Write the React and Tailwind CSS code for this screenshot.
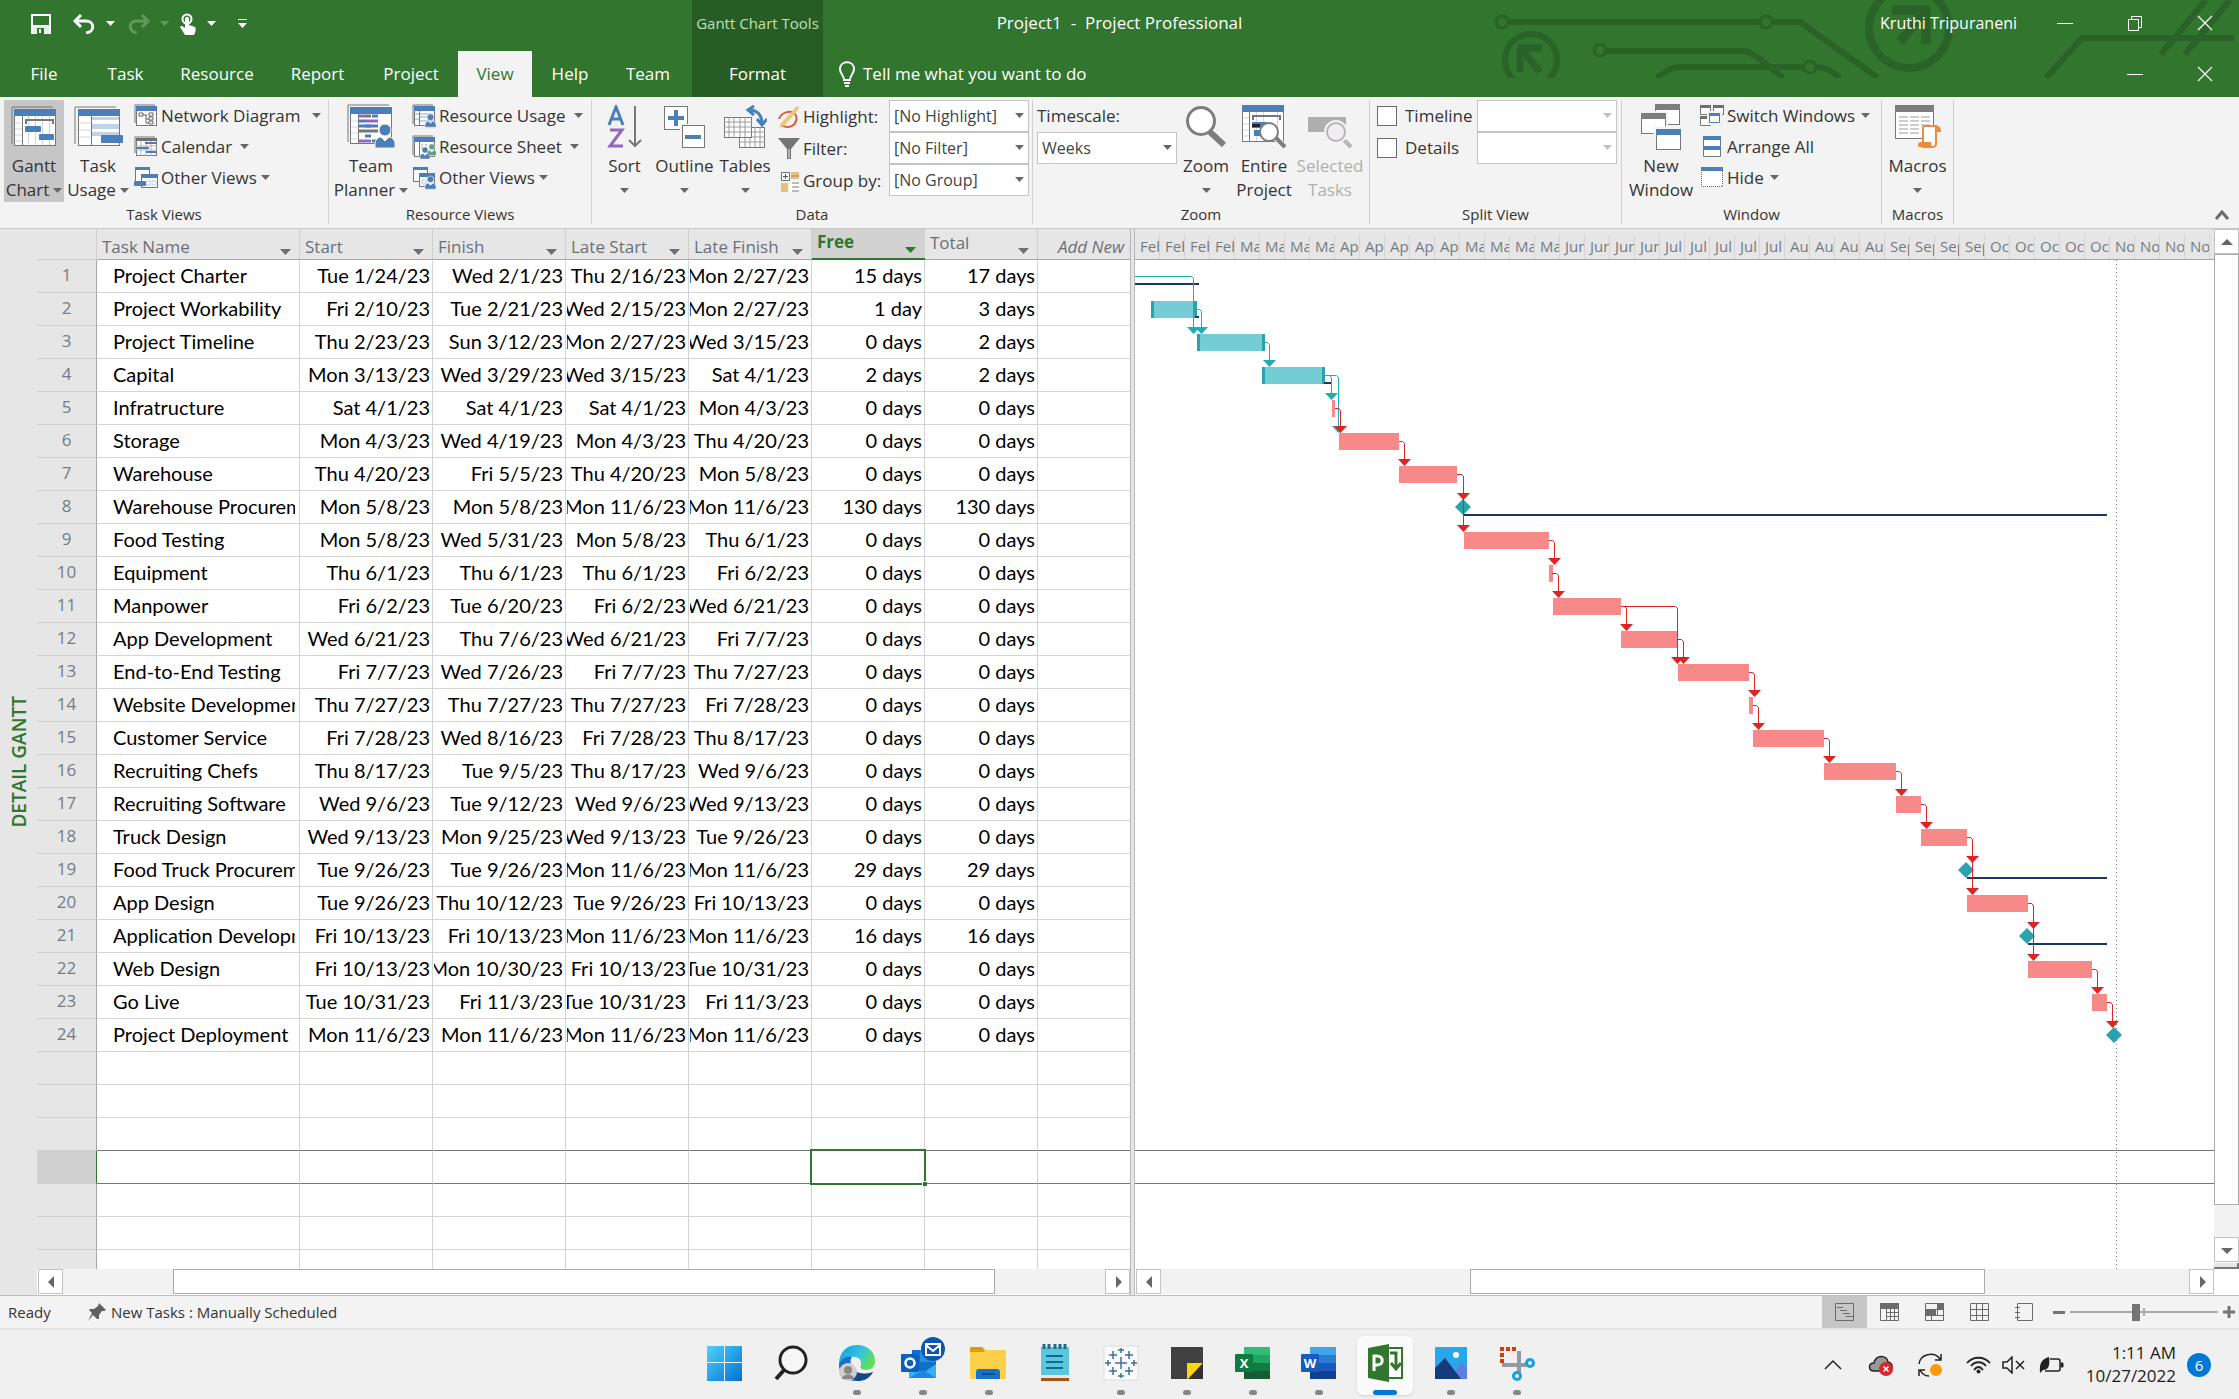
import React from "react";

const BLUE = "#4a7fb8";
const GREY = "#777777";

/* ---------- data ---------- */

const TASKS = [
  ["Project Charter", "Tue 1/24/23", "Wed 2/1/23", "Thu 2/16/23", "Mon 2/27/23", "15 days", "17 days"],
  ["Project Workability", "Fri 2/10/23", "Tue 2/21/23", "Wed 2/15/23", "Mon 2/27/23", "1 day", "3 days"],
  ["Project Timeline", "Thu 2/23/23", "Sun 3/12/23", "Mon 2/27/23", "Wed 3/15/23", "0 days", "2 days"],
  ["Capital", "Mon 3/13/23", "Wed 3/29/23", "Wed 3/15/23", "Sat 4/1/23", "2 days", "2 days"],
  ["Infratructure", "Sat 4/1/23", "Sat 4/1/23", "Sat 4/1/23", "Mon 4/3/23", "0 days", "0 days"],
  ["Storage", "Mon 4/3/23", "Wed 4/19/23", "Mon 4/3/23", "Thu 4/20/23", "0 days", "0 days"],
  ["Warehouse", "Thu 4/20/23", "Fri 5/5/23", "Thu 4/20/23", "Mon 5/8/23", "0 days", "0 days"],
  ["Warehouse Procurement", "Mon 5/8/23", "Mon 5/8/23", "Mon 11/6/23", "Mon 11/6/23", "130 days", "130 days"],
  ["Food Testing", "Mon 5/8/23", "Wed 5/31/23", "Mon 5/8/23", "Thu 6/1/23", "0 days", "0 days"],
  ["Equipment", "Thu 6/1/23", "Thu 6/1/23", "Thu 6/1/23", "Fri 6/2/23", "0 days", "0 days"],
  ["Manpower", "Fri 6/2/23", "Tue 6/20/23", "Fri 6/2/23", "Wed 6/21/23", "0 days", "0 days"],
  ["App Development", "Wed 6/21/23", "Thu 7/6/23", "Wed 6/21/23", "Fri 7/7/23", "0 days", "0 days"],
  ["End-to-End Testing", "Fri 7/7/23", "Wed 7/26/23", "Fri 7/7/23", "Thu 7/27/23", "0 days", "0 days"],
  ["Website Development", "Thu 7/27/23", "Thu 7/27/23", "Thu 7/27/23", "Fri 7/28/23", "0 days", "0 days"],
  ["Customer Service", "Fri 7/28/23", "Wed 8/16/23", "Fri 7/28/23", "Thu 8/17/23", "0 days", "0 days"],
  ["Recruiting Chefs", "Thu 8/17/23", "Tue 9/5/23", "Thu 8/17/23", "Wed 9/6/23", "0 days", "0 days"],
  ["Recruiting Software", "Wed 9/6/23", "Tue 9/12/23", "Wed 9/6/23", "Wed 9/13/23", "0 days", "0 days"],
  ["Truck Design", "Wed 9/13/23", "Mon 9/25/23", "Wed 9/13/23", "Tue 9/26/23", "0 days", "0 days"],
  ["Food Truck Procurement", "Tue 9/26/23", "Tue 9/26/23", "Mon 11/6/23", "Mon 11/6/23", "29 days", "29 days"],
  ["App Design", "Tue 9/26/23", "Thu 10/12/23", "Tue 9/26/23", "Fri 10/13/23", "0 days", "0 days"],
  ["Application Development", "Fri 10/13/23", "Fri 10/13/23", "Mon 11/6/23", "Mon 11/6/23", "16 days", "16 days"],
  ["Web Design", "Fri 10/13/23", "Mon 10/30/23", "Fri 10/13/23", "Tue 10/31/23", "0 days", "0 days"],
  ["Go Live", "Tue 10/31/23", "Fri 11/3/23", "Tue 10/31/23", "Fri 11/3/23", "0 days", "0 days"],
  ["Project Deployment", "Mon 11/6/23", "Mon 11/6/23", "Mon 11/6/23", "Mon 11/6/23", "0 days", "0 days"],
];

const MONTHS = [["Feb", 4], ["Mar", 4], ["Apr", 5], ["May", 4], ["Jun", 4], ["Jul", 5], ["Aug", 4], ["Sep", 4], ["Oct", 5], ["Nov", 4]];
const WEEKS = MONTHS.flatMap(([m, n]) => Array.from({ length: n }, () => m));

/* row number, left, right */
const TEAL_BARS = [[2, 16, 62], [3, 62, 130], [4, 127, 190]];
const RED_BARS = [
  [5, 197, 200], [6, 204, 264], [7, 264, 322], [9, 329, 414], [10, 414, 418], [11, 418, 486],
  [12, 486, 543], [13, 543, 614], [14, 614, 618], [15, 618, 689], [16, 689, 761], [17, 761, 786],
  [18, 786, 832], [20, 832, 893], [22, 893, 957], [23, 957, 972],
];
const SLACK = [[1, 0, 64], [2, 60, 64], [4, 189, 196], [8, 329, 972], [19, 832, 972], [21, 893, 972]];
/* from row, bar end, arrow x, to row, target is a milestone */
const TEAL_LINKS = [[1, 0, 58, 3], [2, 62, 66, 3], [3, 130, 134, 4], [4, 190, 196, 5], [4, 190, 203, 6]];
const RED_LINKS = [
  [5, 200, 205, 6], [6, 264, 269, 7], [7, 322, 328, 8, true], [7, 322, 328, 9], [9, 414, 419, 10], [10, 417, 423, 11],
  [11, 486, 491, 12], [11, 486, 542, 13], [12, 543, 548, 13], [13, 614, 619, 14], [14, 618, 623, 15], [15, 689, 694, 16],
  [16, 761, 766, 17], [17, 786, 791, 18], [18, 832, 837, 19, true], [18, 832, 837, 20], [20, 893, 898, 21, true],
  [20, 893, 898, 22], [22, 957, 962, 23], [23, 972, 977, 24, true],
];
const MILESTONES = [[8, 328], [19, 831], [21, 892], [24, 979]];
const barTop = (row) => 8 + 33 * (row - 1);

/* ---------- small pieces ---------- */

function Caret({ className = "text-[#666]" }) {
  return (
    <svg width="9" height="5" viewBox="0 0 9 5" className={"shrink-0 " + className}>
      <path d="M0 0H9L4.500 5Z" fill="currentColor" />
    </svg>
  );
}

function Svg({ w, h, children }) {
  return (
    <svg width={w} height={h} viewBox={`0 0 ${w} ${h}`} fill="none" className="shrink-0">
      {children}
    </svg>
  );
}

function Person({ x, y, s = 1, color = BLUE }) {
  return (
    <g transform={`translate(${x} ${y}) scale(${s})`} fill={color} stroke="#f3f3f3" strokeWidth="1">
      <path d="M0 24v-4c0-4 3-7 6-7l4 4 4-4c3 0 6 3 6 7v4z" />
      <circle cx="10" cy="6" r="6" />
    </g>
  );
}

/* ---------- large ribbon icons ---------- */

const GanttIcon = () => (
  <Svg w={46} h={42}>
    <path d="M1 38V1H42" stroke={GREY} />
    <rect x="3.500" y="3.500" width="41" height="36" fill="#fff" stroke={GREY} />
    <path d="M4 17h7M4 23h7M4 29h7M4 35h7M17.500 10v29M24.500 10v29M31.500 10v29M38.500 10v29" stroke="#c8d8ea" />
    <path d="M11.500 10v29" stroke={GREY} />
    <path d="M3 3h42v7H3z" fill={BLUE} />
    <path d="M15 18v-4h27v4" stroke={GREY} strokeWidth="2" />
    <rect x="14" y="20" width="16" height="6" rx="1" fill={BLUE} />
    <rect x="28" y="28" width="15" height="6" rx="1" fill={BLUE} />
  </Svg>
);

const TaskUsageIcon = () => (
  <Svg w={49} h={42}>
    <path d="M1 38V1H42" stroke={GREY} />
    <rect x="4.500" y="3.500" width="41" height="36" fill="#fff" stroke={GREY} />
    <path d="M5 17h12M5 24h12M5 31h12" stroke="#c8d8ea" />
    <path d="M18 11h27v3H18zM18 18h27v5H18zM18 26h27v4H18z" fill="#c1d3e9" />
    <path d="M17.500 10v29" stroke={GREY} />
    <path d="M4 3h42v7H4z" fill={BLUE} />
    <rect x="27" y="29" width="22" height="8" rx="1" fill={BLUE} />
  </Svg>
);

const TeamPlannerIcon = () => (
  <Svg w={49} h={46}>
    <path d="M1 38V1H42" stroke={GREY} />
    <rect x="3.500" y="3.500" width="41" height="36" fill="#fff" stroke={GREY} />
    <path d="M4 17h7M4 23h7M4 29h7M4 35h7" stroke="#c8d8ea" />
    <path d="M11.500 10v29" stroke={GREY} />
    <path d="M3 3h42v7H3z" fill={BLUE} />
    <path d="M12 12h6M18 22h6M12 37h6" stroke="#9467bd" strokeWidth="3" />
    <path d="M12 17h6M25 12h6M12 22h19M18 32h6M25 37h5" stroke={BLUE} strokeWidth="3" />
    <path d="M18 12h6M12 27h19" stroke={GREY} strokeWidth="3" />
    <path d="M18 17h13M18 37h6" stroke="#9467bd" strokeWidth="3" />
    <Person x={28} y={20} />
  </Svg>
);

const SortIcon = () => (
  <Svg w={36} h={44}>
    <path d="M2 20L9 2L16 20M5 14H14" stroke={BLUE} strokeWidth="3" />
    <path d="M3 25H15L3 41H16" stroke="#9467bd" strokeWidth="3" />
    <path d="M28 1V41M22 35L28 41L34 35" stroke={GREY} strokeWidth="2" />
  </Svg>
);

const OutlineIcon = () => (
  <Svg w={43} h={44}>
    <rect x="1.500" y="1.500" width="23" height="23" fill="#fff" stroke={GREY} />
    <path d="M5 13h16M13 5v16" stroke={BLUE} strokeWidth="4" />
    <rect x="18.500" y="20.500" width="24" height="23" fill="#fff" stroke="#f3f3f3" strokeWidth="3" />
    <rect x="19.500" y="20.500" width="22" height="22" fill="#fff" stroke={GREY} />
    <path d="M22 32h16" stroke={BLUE} strokeWidth="4" />
  </Svg>
);

const TablesIcon = () => (
  <Svg w={44} h={44}>
    <rect x="16.500" y="22.500" width="25" height="20" fill="#fff" stroke={GREY} />
    <path d="M16 27h26M16 32h26M16 37h26M22 22v20M27 22v20M32 22v20M37 22v20" stroke="#9a9a9a" />
    <rect x="1.500" y="12.500" width="27" height="20" fill="#fff" stroke={GREY} />
    <path d="M1 17h28M1 22h28M1 27h28M6 12v20M11 12v20M17 12v20M22 12v20" stroke="#9a9a9a" />
    <path d="M25 5c9-1 14 5 14 14M31 1l-6 4 6 5M34 14l5 6 5-6" stroke={BLUE} strokeWidth="3" />
  </Svg>
);

const ZoomIcon = () => (
  <Svg w={42} h={42}>
    <path d="M25 26L39 39" stroke="#7d7d7d" strokeWidth="6" />
    <circle cx="16" cy="15" r="13.500" fill="#fff" stroke="#7d7d7d" strokeWidth="3" />
  </Svg>
);

const EntireIcon = () => (
  <Svg w={46} h={45}>
    <rect x="1.500" y="1.500" width="41" height="36" fill="#fff" stroke={GREY} />
    <path d="M2 14h6M2 20h6M2 26h6M2 32h6M15.500 8v29M22.500 8v29M36.500 8v29" stroke="#c8d8ea" />
    <path d="M8.500 8v29" stroke={GREY} />
    <path d="M1 1h42v7H1z" fill={BLUE} />
    <path d="M12 16v-4h27v4" stroke={GREY} strokeWidth="2" />
    <path d="M11 18h15v6H11zM13 26h10v6H13z" fill={BLUE} />
    <path d="M11 20h8v3h-8z" fill="#222" />
    <path d="M34 33l10 10" stroke="#f3f3f3" strokeWidth="6" />
    <path d="M34 33l10 10" stroke="#7d7d7d" strokeWidth="4" />
    <circle cx="28" cy="28" r="9" fill="#fff" stroke="#7d7d7d" strokeWidth="2" />
  </Svg>
);

const SelectedIcon = () => (
  <Svg w={46} h={45}>
    <path d="M1 13h38v15H1z" fill="#aeaeae" />
    <path d="M34 33l10 10" stroke="#b5b5b5" strokeWidth="4" />
    <circle cx="29" cy="28" r="10" fill="#f1eef2" stroke="#f3f3f3" strokeWidth="4" />
    <circle cx="29" cy="28" r="9" fill="#f1eef2" stroke="#b5b5b5" strokeWidth="2" />
  </Svg>
);

const NewWindowIcon = () => (
  <Svg w={42} h={46}>
    <rect x="15.500" y="0.500" width="24" height="20" fill="#fff" stroke={GREY} />
    <path d="M15 0h25v6H15z" fill="#7d7d7d" />
    <rect x="0.500" y="8.500" width="26" height="22" fill="#fff" stroke="#f3f3f3" strokeWidth="3" />
    <rect x="1.500" y="9.500" width="24" height="20" fill="#fff" stroke={GREY} />
    <path d="M1 9h25v6H1z" fill="#7d7d7d" />
    <rect x="15" y="24" width="26" height="21" fill="#fff" stroke="#f3f3f3" strokeWidth="3" />
    <rect x="16.500" y="25.500" width="24" height="20" fill="#fff" stroke={GREY} />
    <path d="M16 25h25v6H16z" fill={BLUE} />
  </Svg>
);

const MacrosIcon = () => (
  <Svg w={46} h={44}>
    <rect x="0.500" y="0.500" width="38" height="33" fill="#fff" stroke={GREY} />
    <path d="M0 0h39v7H0z" fill="#7d7d7d" />
    <path d="M4 12h9M15 12h9M26 12h9M4 16h9M15 16h9M26 16h9M4 20h9M15 20h9M26 20h9M4 24h9M15 24h9M4 28h9M15 28h9" stroke="#9b9b9b" />
    <path d="M28 23c0-2 1-2 2-2h12c-2 1-1 4-1 6v12c0 2-2 3-3 3H28z" fill="#fff" stroke="#e88d3f" strokeWidth="2" />
    <path d="M42 21c3 0 4 2 4 6h-4zM23 41c0-4 2-4 4-4h9c0 4 1 5 3 5H26c-2 0-3 0-3-1z" fill="#e88d3f" />
  </Svg>
);

/* ---------- small ribbon icons ---------- */

const NetworkIcon = () => (
  <Svg w={24} h={23}>
    <path d="M1 19V1H21" stroke={GREY} />
    <rect x="2.500" y="2.500" width="20" height="19" fill="#fff" stroke={GREY} />
    <path d="M2 2h21v5H2z" fill={BLUE} />
    <path d="M5 9h4v3H5zM15 9h4v3h-4zM15 13h4v3h-4zM15 17h4v3h-4zM9 11h4M12 11v8h3M12 15h3" stroke="#666" />
  </Svg>
);
const CalendarIcon = () => (
  <Svg w={24} h={21}>
    <path d="M1 17V1H21" stroke={GREY} />
    <rect x="2.500" y="2.500" width="20" height="17" fill="#fff" stroke={GREY} />
    <path d="M2 10h21M2 14h21M7 5v15M12 5v15M17 5v15" stroke="#b5b5b5" />
    <path d="M2 2h21v3H2z" fill="#6f6f6f" />
    <path d="M11 7h11M3 12h12M12 16h10" stroke={BLUE} strokeWidth="2" />
  </Svg>
);
const OtherTaskIcon = () => (
  <Svg w={24} h={23}>
    <rect x="1.500" y="1.500" width="14" height="14" fill="#fff" stroke={GREY} />
    <path d="M1 1h15v3H1z" fill={BLUE} />
    <rect x="7.500" y="8.500" width="16" height="13" fill="#fff" stroke={GREY} />
    <path d="M7 8h17v4H7z" fill={BLUE} />
    <path d="M12 15h4v4h-4zM18 15h4v4h-4z" stroke="#b4cbe6" />
    <rect x="0" y="15" width="12" height="5" rx="1" fill={BLUE} />
  </Svg>
);
const ResourceUsageIcon = () => (
  <Svg w={24} h={24}>
    <path d="M1 20V1H21" stroke={GREY} />
    <rect x="2.500" y="2.500" width="20" height="19" fill="#fff" stroke={GREY} />
    <path d="M8 10h13M8 13h13M8 17h13M3 10h4M3 15h4" stroke="#c1d3e9" strokeWidth="2" />
    <path d="M7.500 6v15" stroke={GREY} />
    <path d="M2 2h21v5H2z" fill={BLUE} />
    <Person x={13} y={10} s={0.55} />
  </Svg>
);
const ResourceSheetIcon = () => (
  <Svg w={24} h={24}>
    <path d="M1 20V1H21" stroke={GREY} />
    <rect x="2.500" y="2.500" width="20" height="19" fill="#fff" stroke={GREY} />
    <path d="M9 10h12M9 13h12" stroke="#999" strokeDasharray="2 2" />
    <path d="M7.500 6v15" stroke={GREY} />
    <path d="M2 2h21v5H2z" fill={BLUE} />
    <Person x={15} y={9} s={0.48} color="#5f9d85" />
    <Person x={8} y={12} s={0.5} />
  </Svg>
);
const OtherResourceIcon = () => (
  <Svg w={24} h={24}>
    <rect x="1.500" y="1.500" width="14" height="14" fill="#fff" stroke={GREY} />
    <path d="M1 1h15v3H1z" fill={BLUE} />
    <rect x="7.500" y="7.500" width="15" height="13" fill="#fff" stroke={GREY} />
    <path d="M7 7h16v4H7z" fill={BLUE} />
    <path d="M10 14h4v4h-4z" stroke="#b4cbe6" />
    <Person x={13} y={10} s={0.55} />
  </Svg>
);
const HighlightIcon = () => (
  <Svg w={24} h={24}>
    <path d="M2 14c2-6 10-9 15-6 4 3 3 10-2 13-4 2-9 1-11-2" stroke="#d95f43" strokeWidth="2" />
    <path d="M19 2l3-1-1 4L8 20l-6 3 3-6z" fill="#edc57d" />
  </Svg>
);
const FilterIcon = () => (
  <Svg w={24} h={24}>
    <path d="M1 1h22l-9 11v10h-4V12z" fill="#757575" />
    <path d="M12 12v9" stroke="#f3f3f3" />
  </Svg>
);
const GroupIcon = () => (
  <Svg w={24} h={24}>
    <rect x="4.500" y="3.500" width="8" height="8" fill="#fff" stroke={GREY} />
    <path d="M6 7.500h5M8.500 5v5" stroke="#555" />
    <path d="M14 3h8v7h-8zM4 14h7v9H4z" fill="#e8bf7d" />
    <path d="M14 7h8" stroke="#888" />
    <path d="M13 12h9v11h-9z" fill="#fff" />
    <path d="M15 14h7M15 18h7M15 22h7" stroke={GREY} />
  </Svg>
);
const SwitchIcon = () => (
  <Svg w={24} h={23}>
    <path d="M.5 1.500h10v9H.5zM13.500 1.500h10v9h-10zM.5 13.500h10v8H.5z" fill="#fff" stroke={GREY} />
    <path d="M0 1h11v3H0zM13 1h11v3H13zM0 12h11v3H0z" fill="#6f6f6f" />
    <path d="M8 8h13v12H8z" fill="#fff" stroke="#f3f3f3" strokeWidth="2" />
    <path d="M9.500 9.500h10v9h-10z" fill="#fff" stroke={BLUE} />
    <path d="M9 9h11v3H9z" fill={BLUE} />
  </Svg>
);
const ArrangeIcon = () => (
  <Svg w={24} h={23}>
    <path d="M3.500 1.500h17v20h-17z" fill="#fff" stroke={GREY} />
    <path d="M3 1h18v4H3zM3 11h18v4H3z" fill={BLUE} />
  </Svg>
);
const HideIcon = () => (
  <Svg w={24} h={23}>
    <path d="M1.500 2v18.500h21V2" fill="#fff" stroke="#666" strokeDasharray="1 1" />
    <path d="M1 1h22v4H1z" fill={BLUE} />
  </Svg>
);

/* ---------- ribbon pieces ---------- */

function Group({ label, className, children }) {
  return (
    <section aria-label={label} className={"flex shrink-0 flex-col border-r border-[#cfcfcf] " + className}>
      <div className="flex h-[106px] items-start">{children}</div>
      <div className="text-center text-[15px] leading-5 text-[#333]">{label}</div>
    </section>
  );
}

function BigButton({ icon, top, bottom, caret, active, disabled, className }) {
  return (
    <button
      disabled={disabled}
      className={
        "flex h-[102px] shrink-0 flex-col items-center text-[17px] leading-6 whitespace-nowrap " +
        (active ? "bg-[#c6c6c6] " : "") + (disabled ? "text-[#b0b0b0] " : "text-[#333] ") + className
      }
    >
      <span className="flex h-[54px] items-center">{icon}</span>
      <span className="pt-px">{top}</span>
      <span className="flex h-6 items-center gap-1">
        {bottom}
        {caret && <Caret />}
      </span>
    </button>
  );
}

function SmallButton({ icon, label, caret, gap = "gap-2" }) {
  return (
    <button className={"flex h-[31px] items-center text-[17px] leading-6 whitespace-nowrap text-[#333] " + gap}>
      <span className="flex items-center gap-[3px]">
        {icon}
        {label}
      </span>
      {caret && <Caret />}
    </button>
  );
}

function Combo({ label, value, disabled }) {
  return (
    <div className="relative h-8 w-[140px]">
      <select
        aria-label={label}
        disabled={disabled}
        defaultValue={value}
        className="h-8 w-full appearance-none rounded-none border border-[#c3c3c3] bg-white pl-1 text-[16px] text-[#444]"
      >
        <option>{value}</option>
      </select>
      <span className="pointer-events-none absolute top-[13px] right-[5px]">
        <Caret className={disabled ? "text-[#c0c0c0]" : "text-[#666]"} />
      </span>
    </div>
  );
}

function Check({ label }) {
  return (
    <label className="flex h-8 items-center gap-2 text-[17px] text-[#333]">
      <input type="checkbox" className="size-5 appearance-none border border-[#6b6b6b] bg-white" />
      {label}
    </label>
  );
}

function Ribbon() {
  return (
    <div className="flex h-[132px] shrink-0 border-b border-[#c8c8c8] bg-[#f3f3f3] pt-[3px] pb-1">
      <Group label="Task Views" className="w-[329px]">
        <BigButton icon={<GanttIcon />} top="Gantt" bottom="Chart" caret active className="ml-1 w-[60px]" />
        <BigButton icon={<TaskUsageIcon />} top="Task" bottom="Usage" caret className="w-[68px]" />
        <div className="ml-0.5">
          <SmallButton icon={<NetworkIcon />} label="Network Diagram" caret gap="gap-[11px]" />
          <SmallButton icon={<CalendarIcon />} label="Calendar" caret gap="gap-2" />
          <SmallButton icon={<OtherTaskIcon />} label="Other Views" caret gap="gap-1" />
        </div>
      </Group>
      <Group label="Resource Views" className="w-[263px]">
        <BigButton icon={<TeamPlannerIcon />} top="Team" bottom="Planner" caret className="ml-1 w-[76px]" />
        <div className="ml-[3px]">
          <SmallButton icon={<ResourceUsageIcon />} label="Resource Usage" caret gap="gap-2" />
          <SmallButton icon={<ResourceSheetIcon />} label="Resource Sheet" caret gap="gap-2" />
          <SmallButton icon={<OtherResourceIcon />} label="Other Views" caret gap="gap-1" />
        </div>
      </Group>
      <Group label="Data" className="w-[441px]">
        <BigButton icon={<SortIcon />} top="Sort" caret className="ml-1 w-[57px]" />
        <BigButton icon={<OutlineIcon />} top="Outline" caret className="w-[63px]" />
        <BigButton icon={<TablesIcon />} top="Tables" caret className="w-[58px]" />
        <div className="ml-[3px] grid grid-cols-[112px_140px] text-[17px] text-[#333]">
          {[
            [<HighlightIcon />, "Highlight:", "[No Highlight]"],
            [<FilterIcon />, "Filter:", "[No Filter]"],
            [<GroupIcon />, "Group by:", "[No Group]"],
          ].map(([icon, label, value]) => (
            <React.Fragment key={label}>
              <div className="flex h-8 items-center gap-0.5 pt-px whitespace-nowrap">
                {icon}
                {label}
              </div>
              <Combo label={label} value={value} />
            </React.Fragment>
          ))}
        </div>
      </Group>
      <Group label="Zoom" className="w-[337px]">
        <div className="ml-1 text-[17px] text-[#333]">
          <div className="flex h-8 items-center">Timescale:</div>
          <Combo label="Timescale" value="Weeks" />
        </div>
        <BigButton icon={<ZoomIcon />} top="Zoom" caret className="ml-1 w-[50px]" />
        <BigButton icon={<EntireIcon />} top="Entire" bottom="Project" className="w-[66px]" />
        <BigButton icon={<SelectedIcon />} top="Selected" bottom="Tasks" disabled className="w-[66px]" />
      </Group>
      <Group label="Split View" className="w-[252px]">
        <div className="ml-[7px] w-[100px]">
          <Check label="Timeline" />
          <Check label="Details" />
        </div>
        <div>
          <Combo label="Timeline view" value="" disabled />
          <Combo label="Details view" value="" disabled />
        </div>
      </Group>
      <Group label="Window" className="w-[260px]">
        <BigButton icon={<NewWindowIcon />} top="New" bottom="Window" className="ml-1 w-[70px]" />
        <div className="ml-1">
          <SmallButton icon={<SwitchIcon />} label="Switch Windows" caret gap="gap-1.5" />
          <SmallButton icon={<ArrangeIcon />} label="Arrange All" />
          <SmallButton icon={<HideIcon />} label="Hide" caret gap="gap-1.5" />
        </div>
      </Group>
      <Group label="Macros" className="w-[72px]">
        <BigButton icon={<MacrosIcon />} top="Macros" caret className="w-[71px]" />
      </Group>
      <button aria-label="Collapse the Ribbon" className="mt-auto mr-[9px] mb-1 ml-auto">
        <svg width="16" height="10" viewBox="0 0 16 10" fill="none">
          <path d="M2 9L8 2L14 9" stroke="#6b6b6b" strokeWidth="3" />
        </svg>
      </button>
    </div>
  );
}

/* ---------- header ---------- */

function CircuitArt() {
  return (
    <svg width="749" height="78" viewBox="0 0 749 78" fill="none" className="pointer-events-none absolute top-0 right-0" stroke="#296328" strokeWidth="6">
      <circle cx="12" cy="22" r="6" strokeWidth="3" />
      <path d="M19 22H269M283 22H310L388 78" />
      <circle cx="276" cy="22" r="6" strokeWidth="3" />
      <circle cx="110" cy="50" r="6" strokeWidth="3" />
      <path d="M117 51H254Q262 51 293 78M167 78Q180 67 188 67H313M327 67Q338 67 350 78" />
      <circle cx="320" cy="67" r="6" strokeWidth="3" />
      <circle cx="41" cy="60" r="26" />
      <path d="M28 48H52M30 47V72M32 50L50 72" strokeWidth="7" />
      <circle cx="419" cy="28" r="40" strokeWidth="8" />
      <path d="M402 10H440M436 8V44M434 12L410 42" strokeWidth="9" />
      <path d="M556 78L592 38H744M671 54L716 0M695 54L740 0" />
    </svg>
  );
}

const WinMin = () => (
  <Svg w={16} h={16}><path d="M0 8.500H16" stroke="#fff" /></Svg>
);
const WinClose = () => (
  <Svg w={16} h={16}><path d="M1 1L15 15M15 1L1 15" stroke="#fff" strokeWidth="1.200" /></Svg>
);

function Header() {
  const tab = "flex h-full items-center justify-center text-[17px] text-white ";
  return (
    <header className="relative h-[97px] shrink-0 bg-[#31752f] text-white">
      <CircuitArt />
      <div className="relative grid h-[51px] grid-cols-[1fr_auto_1fr]">
        <div className="flex">
          <div className="flex w-[692px] items-center pb-1 pl-[31px]">
            <button aria-label="Save">
              <Svg w={20} h={20}>
                <path d="M1 1H19V19H1Z" stroke="#fff" strokeWidth="2" />
                <path d="M2 11H18V19H2Z" fill="#e9efe9" />
                <path d="M6 14H13V20H6Z" fill="#31752f" />
                <path d="M8 15H10V19H8Z" fill="#fff" />
              </Svg>
            </button>
            <button aria-label="Undo" className="ml-[21px]">
              <Svg w={24} h={20}>
                <path d="M9 1L3 7L9 13M3 7H14C23 7 23 18 14 19" stroke="#fff" strokeWidth="3" />
              </Svg>
            </button>
            <span className="ml-[10px]"><Caret className="text-white" /></span>
            <button aria-label="Redo" className="ml-[12px]">
              <Svg w={24} h={20}>
                <path d="M15 1L21 7L15 13M21 7H10C1 7 1 18 10 19" stroke="#5f9a5d" strokeWidth="3" />
              </Svg>
            </button>
            <span className="ml-[9px]"><Caret className="text-[#5f9a5d]" /></span>
            <button aria-label="Touch/Mouse Mode" className="ml-[10px]">
              <Svg w={18} h={22}>
                <circle cx="8" cy="6" r="4.500" stroke="#fff" strokeWidth="2" />
                <path d="M6 6c0-3 4-3 4 0v6l6 2c1 1 1 5-1 8H6l-5-8c1-2 3-1 5 1z" fill="#fff" />
              </Svg>
            </button>
            <span className="ml-[10px]"><Caret className="text-white" /></span>
            <button aria-label="Customize Quick Access Toolbar" className="ml-[22px] flex flex-col gap-[3px]">
              <span className="h-px w-[9px] bg-white" />
              <Caret className="text-white" />
            </button>
          </div>
          <div className="flex w-[131px] shrink-0 justify-center bg-[#275c25] pt-[11px] text-[15px] leading-6 whitespace-nowrap text-[#bfe0b8]">
            Gantt Chart Tools
          </div>
        </div>
        <h1 className="pt-[11px] text-[17px] leading-6 whitespace-pre">{"Project1  -  Project Professional"}</h1>
        <div className="flex justify-end pt-[11px] pr-[26px] text-[16px] leading-6">
          <span>Kruthi Tripuraneni</span>
          <div className="ml-10 flex h-6 items-center gap-[54px]">
            <button aria-label="Minimize"><WinMin /></button>
            <button aria-label="Restore">
              <Svg w={16} h={16}>
                <path d="M1.500 4.500H11.500V15.500H1.500ZM4.500 4.500V1.500H14.500V12.500H11.500" stroke="#fff" />
              </Svg>
            </button>
            <button aria-label="Close"><WinClose /></button>
          </div>
        </div>
      </div>
      <nav className="relative flex h-[46px] items-center">
        <button className={tab + "w-[88px]"}>File</button>
        <button className={tab + "w-[75px]"}>Task</button>
        <button className={tab + "w-[108px]"}>Resource</button>
        <button className={tab + "w-[93px]"}>Report</button>
        <button className={tab + "w-[94px]"}>Project</button>
        <button className="flex h-full w-[74px] items-center justify-center bg-[#f3f3f3] text-[17px] text-[#31752f]">View</button>
        <button className={tab + "w-[76px]"}>Help</button>
        <button className={tab + "w-[80px]"}>Team</button>
        <button className={tab + "ml-1 w-[131px] bg-[#275c25]"}>Format</button>
        <button className="ml-[15px] flex items-center gap-[7px] text-[17px]">
          <Svg w={18} h={26}>
            <path d="M6 19C6 14 2 13 2 8C2 -1 16 -1 16 8C16 13 12 14 12 19ZM6 22H12M7 25H11" stroke="#fff" strokeWidth="2" />
          </Svg>
          Tell me what you want to do
        </button>
        <div className="mr-[26px] ml-auto flex gap-[54px]">
          <button aria-label="Minimize document"><WinMin /></button>
          <button aria-label="Close document"><WinClose /></button>
        </div>
      </nav>
    </header>
  );
}

/* ---------- sheet ---------- */

const COLUMNS = ["Task Name", "Start", "Finish", "Late Start", "Late Finish", "Free", "Total"];

function Sheet() {
  const rows = Array.from({ length: 31 }, (_, i) => TASKS[i] || null);
  return (
    <table className="w-full table-fixed border-separate border-spacing-0">
      <colgroup>
        <col className="w-[60px]" />
        <col className="w-[203px]" />
        <col className="w-[133px]" />
        <col className="w-[133px]" />
        <col className="w-[123px]" />
        <col className="w-[123px]" />
        <col className="w-[113px]" />
        <col className="w-[113px]" />
        <col />
      </colgroup>
      <thead>
        <tr className="h-[31px] bg-[#e6e6e6] text-left text-[17px] leading-6 text-[#6a7078]">
          <th aria-label="Row" className="border-r border-b border-[#cfcfcf] p-0" />
          {COLUMNS.map((c) => {
            const free = c === "Free";
            return (
              <th
                key={c}
                className={
                  "p-0 font-normal " +
                  (free ? "border-b-2 border-[#31752f] bg-[#d2d2d2]" : "border-r border-b border-r-[#cfcfcf] border-b-[#a6a6a6]")
                }
              >
                <div className={"flex items-end justify-between pl-[5px] " + (free ? "pr-[9px]" : "pr-2")}>
                  <span className={free ? "pb-[3px] font-bold text-[#31752f]" : c === "Total" ? "pb-[3px]" : "pt-[5px]"}>{c}</span>
                  <svg width="11" height="14" viewBox="0 0 11 14" className={free ? "text-[#31752f]" : "text-[#6a7078]"}>
                    <path d="M0 4H11L5.500 10Z" fill="currentColor" />
                  </svg>
                </div>
              </th>
            );
          })}
          <th className="border-b border-[#a6a6a6] p-0 font-normal">
            <div className="overflow-hidden pt-[5px] pl-5 whitespace-nowrap italic">Add New Column</div>
          </th>
        </tr>
      </thead>
      <tbody>
        {rows.map((t, i) => {
          const selected = i === 27;
          const line = i === 26 || selected ? "border-b-[#777] " : "border-b-[#d4d4d4] ";
          return (
            <tr key={i} className="h-[33px]">
              <th
                scope="row"
                className={
                  "border-r border-b border-b-[#cfcfcf] p-0 pb-0.5 text-center text-[17px] leading-6 font-normal text-[#757b83] " +
                  (selected ? "border-r-[#31752f] bg-[#d0d0d0]" : "border-r-[#a6a6a6] bg-[#e6e6e6]")
                }
              >
                {t ? i + 1 : ""}
              </th>
              {COLUMNS.map((c, j) => (
                <td key={c} className={"relative border-r border-b border-r-[#d4d4d4] bg-white p-0 " + line}>
                  {t && (
                    <div
                      className={
                        "flex overflow-hidden pb-0.5 font-[Lato] text-[20px] leading-7 whitespace-nowrap text-black " +
                        (j === 0 ? "mr-1 ml-4" : "ml-px justify-end pr-0.5")
                      }
                    >
                      {t[j]}
                    </div>
                  )}
                  {selected && c === "Free" && (
                    <div className="absolute -top-0.5 -right-0.5 -bottom-0.5 -left-0.5 z-10 border-2 border-[#31752f]">
                      <span className="absolute -right-[3px] -bottom-[3px] size-[5px] border-t border-l border-white bg-[#31752f]" />
                    </div>
                  )}
                </td>
              ))}
              <td className={"border-b bg-white p-0 " + line} />
            </tr>
          );
        })}
      </tbody>
    </table>
  );
}

/* ---------- chart ---------- */

function Link({ link, color }) {
  const [from, x, ax, to, milestone] = link;
  const y = barTop(from) + 8.5;
  const tip = barTop(to) - (milestone ? 0 : 1);
  const cx = ax + 0.5;
  return (
    <g>
      <path d={`M${x} ${y}H${cx - 2}L${cx} ${y + 2}V${tip - 5}`} stroke={color} fill="none" />
      <path d={`M${cx - 6.5} ${tip - 6}H${cx + 6.5}L${cx} ${tip + 1}Z`} fill={color} />
    </g>
  );
}

function Chart() {
  return (
    <svg width="1079" height="1009" viewBox="0 0 1079 1009" role="img" aria-label="Gantt chart" className="block">
      <path d="M981.500 0V1009" stroke="#777" strokeDasharray="1 3" />
      <path d="M0 890.500H1079M0 923.500H1079" stroke="#777" />
      {TEAL_BARS.map(([r, a, b]) => (
        <g key={r}>
          <rect x={a} y={barTop(r)} width={b - a} height="17" fill="#74cdd4" />
          <path d={`M${a} ${barTop(r)}h3v17h-3zM${b - 3} ${barTop(r)}h3v17h-3z`} fill="#2ba3ae" />
        </g>
      ))}
      {RED_BARS.map(([r, a, b]) => (
        <rect key={r} x={a} y={barTop(r)} width={b - a} height="17" fill="#f88989" />
      ))}
      {MILESTONES.map(([r, x]) => (
        <path key={r} d={`M${x} ${barTop(r)}l8 8l-8 8l-8 -8z`} fill="#2ba3ae" />
      ))}
      {SLACK.map(([r, a, b]) => (
        <rect key={r} x={a} y={barTop(r) + 15} width={b - a} height="2" fill="#1b3863" />
      ))}
      {TEAL_LINKS.map((l, i) => (
        <Link key={i} link={l} color="#1fabb8" />
      ))}
      {RED_LINKS.map((l, i) => (
        <Link key={i} link={l} color="#de2323" />
      ))}
    </svg>
  );
}

/* ---------- scroll bars ---------- */

function Arrow({ dir }) {
  const d = { left: "M9 0V12L3 6Z", right: "M4 0V12L10 6Z", up: "M0 9H12L6 3Z", down: "M0 4H12L6 10Z" }[dir];
  return (
    <button aria-label={"Scroll " + dir} className="flex size-[25px] shrink-0 items-center justify-center border border-[#c3c3c3] bg-white">
      <svg width="12" height="12" viewBox="0 0 12 12"><path d={d} fill="#666" /></svg>
    </button>
  );
}

function HScroll({ before, thumb, after }) {
  return (
    <div className="flex h-[26px] shrink-0 bg-white pl-px">
      <Arrow dir="left" />
      <div className="flex h-[25px] flex-1 bg-[#f2f2f2]">
        <div style={{ flexGrow: before }} />
        <div className="border border-[#ababab] bg-white" style={{ flexGrow: thumb }} />
        <div style={{ flexGrow: after }} />
      </div>
      <Arrow dir="right" />
    </div>
  );
}

/* ---------- status bar ---------- */

const VIEW_ICONS = [
  ["Gantt Chart", <path d="M.5 .5h18v17H.5zM2 4.500h6M5 7.500h7M8 10.500h7M11 13.500h7" stroke="#6b6b6b" />],
  ["Task Usage", <><path d="M.5 .5h18v17H.5zM6.500 5v12M10.500 5v12M14.500 5v12M6 9.500h12M6 13.500h12" stroke="#6b6b6b" /><path d="M0 0h19v6H0z" fill="#6b6b6b" /></>],
  ["Team Planner", <><path d="M.5 .5h18v17H.5zM.5 6.500h18M.5 12.500h18M6.500 12v6M12.500 0v12" stroke="#6b6b6b" /><path d="M12 0h7v7h-7zM0 6h11v7H0z" fill="#6b6b6b" /></>],
  ["Resource Sheet", <path d="M.5 .5h18v17H.5zM6.500 0v18M12.500 0v18M0 6.500h19M0 12.500h19" stroke="#6b6b6b" />],
  ["Report", <path d="M2.500 .5h15v17h-15zM0 4.500h5M0 9.500h5M0 14.500h5" stroke="#6b6b6b" />],
];

function StatusBar() {
  return (
    <footer className="flex h-[35px] shrink-0 items-center border-t border-b-2 border-t-[#bdbdbd] border-b-[#e4e4e4] bg-[#f3f3f3] pl-2 text-[15px] text-[#333]">
      <span className="w-[79px]">Ready</span>
      <button className="flex items-center gap-[5px]">
        <Svg w={19} h={19}>
          <path d="M12 0l7 7-2 1-2 0-3 4 0 4-2 0-4-4L1 18l4-8-3-3 1-1 4 0 4-3z" fill="#5f5f5f" />
        </Svg>
        New Tasks : Manually Scheduled
      </button>
      <div className="ml-auto flex h-full items-center">
        {VIEW_ICONS.map(([name, icon], i) => (
          <button key={name} aria-label={name} className={"flex h-full w-[45px] items-center justify-center " + (i === 0 ? "bg-[#c6c6c6]" : "")}>
            <Svg w={19} h={18}>{icon}</Svg>
          </button>
        ))}
      </div>
      <button aria-label="Zoom out" className="ml-[6px] h-[3px] w-3 bg-[#757575]" />
      <div className="relative mx-[5px] flex h-5 w-[148px] items-center">
        <div className="h-0.5 w-full bg-[#a9a9a9]" />
        <div className="absolute left-[73px] h-2 w-0.5 bg-[#a9a9a9]" />
        <input
          type="range"
          aria-label="Zoom level"
          defaultValue="44"
          className="absolute inset-0 w-full appearance-none bg-transparent [&::-webkit-slider-thumb]:h-[17px] [&::-webkit-slider-thumb]:w-2 [&::-webkit-slider-thumb]:appearance-none [&::-webkit-slider-thumb]:bg-[#757575]"
        />
      </div>
      <button aria-label="Zoom in" className="mr-1">
        <Svg w={12} h={12}><path d="M0 6H12M6 0V12" stroke="#757575" strokeWidth="3" /></Svg>
      </button>
    </footer>
  );
}

/* ---------- taskbar ---------- */

function OfficeIcon({ letter, c }) {
  return (
    <Svg w={36} h={34}>
      <path d="M9 1H35V9H9Z" fill={c[0]} />
      <path d="M9 9H35V17H9Z" fill={c[1]} />
      <path d="M9 17H35V25H9Z" fill={c[2]} />
      <path d="M9 25H35V33H9Z" fill={c[3]} />
      <rect x="0" y="8" width="18" height="18" rx="1" fill={c[4]} />
      <text x="9" y="22" textAnchor="middle" fill="#fff" fontSize="13" fontWeight="700">{letter}</text>
    </Svg>
  );
}

const APPS = [
  ["Start", "none", (
    <Svg w={36} h={36}>
      <defs><linearGradient id="win" x1="0" y1="0" x2="1" y2="1"><stop stopColor="#4fd0fb" /><stop offset="1" stopColor="#0073d0" /></linearGradient></defs>
      <path d="M0 1H17V17H0ZM18 1H35V17H18ZM0 18H17V36H0ZM18 18H35V36H18Z" fill="url(#win)" />
    </Svg>
  )],
  ["Search", "none", (
    <Svg w={34} h={36}>
      <path d="M11 24L2 34" stroke="#222" strokeWidth="4" />
      <circle cx="19" cy="15" r="13" stroke="#222" strokeWidth="3" fill="#f6f6f6" />
    </Svg>
  )],
  ["Edge", "dot", (
    <Svg w={38} h={38}>
      <defs><linearGradient id="edge" x1="0" y1="0" x2="1" y2="0.500"><stop stopColor="#149be0" /><stop offset=".6" stopColor="#33c3dc" /><stop offset="1" stopColor="#5fe05b" /></linearGradient></defs>
      <path d="M1 20C1 8 9 1 19 1C30 1 37 8 37 17C37 23 33 26 28 26C22 26 22 23 23 21C24 16 20 12 14 13C7 14 2 18 1 25Z" fill="url(#edge)" />
      <path d="M1 21C3 14 9 12 14 13C11 16 12 28 24 30C28 31 32 30 35 28C31 35 25 37 19 37C8 37 1 31 1 21Z" fill="#1b6fc4" />
      <path d="M14 19C14 28 22 32 35 28C31 35 25 37 19 37C13 34 12 27 14 19Z" fill="#11498b" />
      <circle cx="10" cy="28" r="9" fill="#d2d0ce" />
      <circle cx="10" cy="26" r="4" fill="#8a8886" />
      <path d="M4 35C4 29 16 29 16 35Z" fill="#8a8886" />
    </Svg>
  )],
  ["Outlook", "dot", (
    <Svg w={46} h={46}>
      <path d="M12 14H36V42H12Z" fill="#1070c6" />
      <path d="M20 14H36V26H20Z" fill="#2a8fe0" />
      <path d="M9 28L23 37L36 28V42H9Z" fill="#34b0f2" />
      <path d="M9 42L23 34L36 42Z" fill="#1c87dc" />
      <rect x="1" y="18" width="18" height="18" rx="1" fill="#0a61bd" />
      <circle cx="10" cy="27" r="4.500" stroke="#fff" strokeWidth="2.500" />
      <circle cx="33" cy="13" r="12" fill="#0a56b3" />
      <path d="M26 8H40V19H26ZM26 9L33 15L40 9" stroke="#fff" strokeWidth="2" />
    </Svg>
  )],
  ["File Explorer", "dot", (
    <Svg w={37} h={34}>
      <path d="M0 2Q0 1 1 1H12L16 5H35V12H0Z" fill="#dc9c0b" />
      <path d="M0 6H13L16 4H35Q36 4 36 5V33H0Z" fill="#fdd04a" />
      <path d="M6 33V26Q6 23 9 23H27Q30 23 30 26V33Z" fill="#1473c9" />
      <path d="M12 28H25" stroke="#0a4f94" strokeWidth="2" />
    </Svg>
  )],
  ["Notepad", "none", (
    <Svg w={30} h={38}>
      <path d="M1 3H29V33H1Z" fill="#5cc6de" />
      <path d="M1 33H29V37H1Z" fill="#a9530e" />
      <path d="M1 31H29V34H1Z" fill="#e6e6e6" />
      <path d="M4 0V5M9 0V5M15 0V5M20 0V5M25 0V5" stroke="#1d6d8c" strokeWidth="3" />
      <path d="M6 12H23M6 18H23M6 24H23" stroke="#0c6d92" strokeWidth="2" />
    </Svg>
  )],
  ["Tableau", "dot", (
    <Svg w={36} h={36}>
      <path d="M1 1H35V35H1Z" fill="#fafafa" stroke="#ddd" />
      <path d="M18 12V24M12 18H24M10 6V14M6 10H14M26 6V14M22 10H30M10 22V30M6 26H14M26 22V30M22 26H30M18 3V8M15 5H21M18 28V33M15 31H21M5 15V21M2 18H8M31 15V21M28 18H34" stroke="#3d7199" strokeWidth="1.500" />
    </Svg>
  )],
  ["Sticky Notes", "dot", (
    <Svg w={32} h={34}>
      <path d="M0 1H32V33H0Z" fill="#404040" />
      <path d="M16 17H32L18 33H16Z" fill="#ffd60a" />
      <path d="M32 17V33H17Z" fill="#333" />
    </Svg>
  )],
  ["Excel", "dot", <OfficeIcon letter="X" c={["#2fbd78", "#21a366", "#107c41", "#185c37", "#107c41"]} />],
  ["Word", "dot", <OfficeIcon letter="W" c={["#41a5ee", "#2b7cd3", "#185abd", "#103f91", "#185abd"]} />],
  ["Project", "active", (
    <Svg w={36} h={38}>
      <path d="M20 4H35V34H20Z" fill="#fff" stroke="#31752f" strokeWidth="2" />
      <path d="M23 9H29V23M24 19L29 25L34 19" stroke="#31752f" strokeWidth="3" />
      <path d="M1 4L22 0V38L1 34Z" fill="#31752f" />
      <path d="M7 27V12H10C17 12 17 21 10 21H7" stroke="#fff" strokeWidth="3" />
    </Svg>
  )],
  ["Photos", "dot", (
    <Svg w={32} h={34}>
      <rect x="0" y="1" width="32" height="32" rx="1" fill="#2aa7ea" />
      <path d="M16 33L26 16L32 22V33Z" fill="#5a7fe0" />
      <path d="M0 22L10 12L26 33H0Z" fill="#173a7a" />
      <circle cx="21" cy="9" r="3" fill="#fff" />
    </Svg>
  )],
  ["Snipping Tool", "dot", (
    <Svg w={38} h={36}>
      <path d="M4 18V4H20" stroke="#d83b01" strokeWidth="4" strokeDasharray="4 2" />
      <path d="M4 20H28M21 6V28" stroke="#8f9aa5" strokeWidth="4" />
      <circle cx="32" cy="18" r="3.500" stroke="#1a9fe0" strokeWidth="3" />
      <circle cx="19" cy="31" r="3.500" stroke="#1a9fe0" strokeWidth="3" />
    </Svg>
  )],
];

function Taskbar() {
  return (
    <div className="grid h-[69px] shrink-0 grid-cols-[1fr_auto_1fr] bg-[#f0f0f0]">
      <div />
      <div className="flex pl-0.5">
        {APPS.map(([name, state, icon]) => (
          <button
            key={name}
            aria-label={name}
            className="flex h-[69px] w-[66px] flex-col items-center pt-[6px]"
          >
            <span className={"flex h-[59px] w-14 flex-col items-center justify-end gap-[3px] rounded-md " + (state === "active" ? "bg-[#fafafa] shadow-sm" : "")}>
              <span className={"flex h-[49px] items-center justify-center " + (name === "Outlook" ? "pb-2" : "")}>{icon}</span>
              <span
                className={
                  "h-[5px] rounded-full " +
                  (state === "active" ? "w-6 bg-[#0078d7]" : state === "dot" ? "w-2 bg-[#868686]" : "w-2")
                }
              />
            </span>
          </button>
        ))}
      </div>
      <div className="flex items-center justify-end pr-7 text-[17px] leading-6 text-[#1b1b1b]">
        <button aria-label="Show hidden icons">
          <Svg w={18} h={11}><path d="M1 10L9 2L17 10" stroke="#222" strokeWidth="1.500" /></Svg>
        </button>
        <button aria-label="OneDrive" className="ml-[26px]">
          <Svg w={26} h={24}>
            <path d="M6 18C0 18 0 10 6 10C8 1 19 2 20 9C25 9 26 18 20 18Z" fill="#999" stroke="#222" strokeWidth="1.500" />
            <circle cx="18" cy="16" r="7" fill="#d9252c" />
            <path d="M15.500 13.500L20.500 18.500M20.500 13.500L15.500 18.500" stroke="#fff" strokeWidth="1.500" />
          </Svg>
        </button>
        <button aria-label="Updates" className="ml-[23px]">
          <Svg w={26} h={26}>
            <path d="M2 12C3 2 17 -1 23 7M24 2V8H18M2 24V18H8M3 18C5 22 8 24 12 24" stroke="#222" strokeWidth="1.500" />
            <circle cx="19" cy="18" r="6" fill="#ff9a0a" />
          </Svg>
        </button>
        <button aria-label="Network" className="ml-[23px]">
          <Svg w={25} h={18}>
            <path d="M1 7C7 0 18 0 24 7M5 10C9 5 16 5 20 10M8 14C11 10 14 10 17 14" stroke="#222" strokeWidth="1.800" />
            <circle cx="12.500" cy="15.500" r="2" fill="#222" />
          </Svg>
        </button>
        <button aria-label="Volume muted" className="ml-[11px]">
          <Svg w={24} h={18}>
            <path d="M1 6H5L10 1V17L5 12H1ZM14 5L22 13M22 5L14 13" stroke="#222" strokeWidth="1.500" />
          </Svg>
        </button>
        <button aria-label="Battery" className="ml-[13px]">
          <Svg w={25} h={18}>
            <path d="M6 15H19Q21 15 21 13V5Q21 3 19 3H11" stroke="#222" strokeWidth="1.500" />
            <path d="M22 7H24V11H22Z" fill="#222" stroke="#222" />
            <path d="M1 17C0 7 3 3 10 1C11 9 10 14 4 14Z" fill="#222" />
          </Svg>
        </button>
        <button className="ml-[22px] pb-0.5 text-right text-[17px] leading-[23px]">
          <span className="block">1:11 AM</span>
          <span className="block">10/27/2022</span>
        </button>
        <button className="ml-[11px] flex size-6 items-center justify-center rounded-full bg-[#0078d7] text-[15px] text-white">6</button>
      </div>
    </div>
  );
}

/* ---------- page ---------- */

export default function App() {
  return (
    <div className="flex h-screen flex-col overflow-hidden bg-white font-['Open_Sans',sans-serif]">
      <Header />
      <Ribbon />
      <main className="flex min-h-0 flex-1">
        <div className="flex w-[37px] shrink-0 items-center justify-center bg-[#e6e6e6]">
          <span className="rotate-180 text-[19px] leading-6 font-semibold whitespace-nowrap text-[#31752f] [writing-mode:vertical-rl]">
            DETAIL GANTT
          </span>
        </div>
        <section aria-label="Task sheet" className="flex w-[1093px] shrink-0 flex-col">
          <div className="min-h-0 flex-1 overflow-hidden">
            <Sheet />
          </div>
          <HScroll before={110} thumb={821} after={110} />
        </section>
        <div className="w-[5px] shrink-0 border-r border-l border-[#b9b9b9] bg-[#e6e6e6]" />
        <section aria-label="Schedule" className="flex min-w-0 flex-1 flex-col">
          <div className="flex h-[31px] shrink-0 overflow-hidden border-b border-[#a6a6a6] bg-[#e6e6e6] pt-[6px] text-[15px] leading-[22px] text-[#757b83]">
            {WEEKS.map((m, i) => (
              <div key={i} className="w-[25px] shrink-0 overflow-hidden border-r border-[#d4d4d4] pl-[5px]">{m}</div>
            ))}
          </div>
          <div className="min-h-0 flex-1 overflow-hidden">
            <Chart />
          </div>
          <HScroll before={310} thumb={514} after={204} />
        </section>
        <div className="flex w-[25px] shrink-0 flex-col bg-white pb-[26px]">
          <Arrow dir="up" />
          <div className="flex flex-1 flex-col bg-[#f2f2f2]">
            <div className="flex-[951] border border-[#ababab] bg-white" />
            <div className="flex-[32]" />
          </div>
          <Arrow dir="down" />
          <div className="mt-px h-[6px] border-r-2 border-b-2 border-[#777] bg-[#e6e6e6]" />
        </div>
      </main>
      <StatusBar />
      <Taskbar />
    </div>
  );
}
